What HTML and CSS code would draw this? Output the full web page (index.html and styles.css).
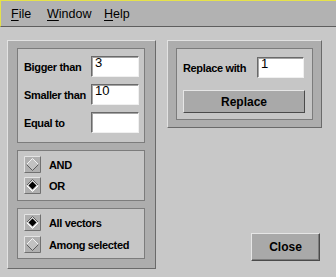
FILE: index.html
```html
<!DOCTYPE html>
<html lang="en">
  <head>
    <meta charset="UTF-8" />
    <title>Select vectors</title>
    <link rel="stylesheet" href="styles.css">
  </head>
  <body>
    <svg class="defs" width="0" height="0">
      <symbol id="radio-off" viewBox="0 0 17 17">
        <rect x="0.5" y="0.5" width="16" height="16" fill="#b0b0b0" />
        <path d="M0.5 16.5V0.5H16.5" stroke="#e4e4e4" fill="none" />
        <path d="M16.5 0.5V16.5H0.5" stroke="#707070" fill="none" />
        <polygon points="8.5,2.5 14.5,8.5 8.5,14.5 2.5,8.5" fill="#c2c2c2" />
        <path d="M2.5 8.5L8.5 2.5L14.5 8.5" stroke="#f4f4f4" fill="none" />
        <path d="M2.5 8.5L8.5 14.5L14.5 8.5" stroke="#5c5c5c" fill="none" />
      </symbol>
      <symbol id="radio-on" viewBox="0 0 17 17">
        <rect x="0.5" y="0.5" width="16" height="16" fill="#b0b0b0" />
        <path d="M0.5 16.5V0.5H16.5" stroke="#e4e4e4" fill="none" />
        <path d="M16.5 0.5V16.5H0.5" stroke="#707070" fill="none" />
        <polygon points="8.5,2.5 14.5,8.5 8.5,14.5 2.5,8.5" fill="#e0e0e0" />
        <path d="M2.5 8.5L8.5 2.5L14.5 8.5" stroke="#5c5c5c" fill="none" />
        <path d="M2.5 8.5L8.5 14.5L14.5 8.5" stroke="#ffffff" fill="none" />
        <polygon points="8.5,4.5 12.5,8.5 8.5,12.5 4.5,8.5" fill="#000" />
      </symbol>
    </svg>

    <div class="menubar">
      <span class="menu-item file"><u>F</u>ile</span>
      <span class="menu-item window"><u>W</u>indow</span>
      <span class="menu-item"><u>H</u>elp</span>
    </div>

    <div class="main">
      <div class="frame left-frame">
        <div class="box fields">
          <div class="row">
            <label for="bigger">Bigger than</label>
            <input type="text" id="bigger" value="3" />
          </div>
          <div class="row">
            <label for="smaller">Smaller than</label>
            <input type="text" id="smaller" value="10" />
          </div>
          <div class="row">
            <label for="equal">Equal to</label>
            <input type="text" id="equal" value="" />
          </div>
        </div>

        <div class="box choices logic">
          <div class="choice">
            <svg width="17" height="17"><use href="#radio-off" /></svg>
            <span>AND</span>
          </div>
          <div class="choice">
            <svg width="17" height="17"><use href="#radio-on" /></svg>
            <span>OR</span>
          </div>
        </div>

        <div class="box choices scope">
          <div class="choice">
            <svg width="17" height="17"><use href="#radio-on" /></svg>
            <span>All vectors</span>
          </div>
          <div class="choice">
            <svg width="17" height="17"><use href="#radio-off" /></svg>
            <span>Among selected</span>
          </div>
        </div>
      </div>

      <div class="right-col">
        <div class="frame right-frame">
          <div class="box replace-box">
            <div class="row">
              <label for="replace">Replace with</label>
              <input type="text" id="replace" value="1" />
            </div>
            <button class="btn replace-btn">Replace</button>
          </div>
        </div>
        <button class="btn close-btn">Close</button>
      </div>
    </div>
  </body>
</html>
```

FILE: styles.css
```css
body {
  margin: 0;
  background: #c8c8c8;
  font-family: "Liberation Sans", Arial, sans-serif;
  color: #000;
  width: 336px;
  height: 277px;
  overflow: hidden;
}
.defs {
  position: absolute;
}
.menubar {
  box-sizing: border-box;
  height: 27px;
  background: #b2b2b2;
  border-top: 1px solid #e6e24a;
  border-left: 1px solid #e6e24a;
  border-bottom: 1px solid #5e5e5e;
  display: flex;
  align-items: center;
  padding-left: 10px;
  font-size: 12.5px;
}
.menu-item u {
  text-underline-offset: 2px;
}
.menu-item.file {
  width: 36px;
}
.menu-item.window {
  width: 57px;
}
.main {
  display: flex;
  gap: 11px;
  padding: 13px 0 0 7px;
}
.frame {
  box-sizing: border-box;
  background: #adadad;
  border: 1px solid;
  border-color: #e2e2e2 #6a6a6a #6a6a6a #e2e2e2;
}
.left-frame {
  width: 149px;
  padding: 7px 10px 9px 9px;
  display: flex;
  flex-direction: column;
  gap: 7px;
}
.box {
  background: #c6c6c6;
  border: 1px solid #7c7c7c;
}
.row {
  display: flex;
  align-items: center;
  justify-content: space-between;
}
label,
.choice span {
  font-size: 11px;
  font-weight: bold;
  letter-spacing: -0.35px;
}
.fields {
  padding: 7px 5px 9px 6px;
  display: flex;
  flex-direction: column;
  gap: 7px;
}
input[type='text'] {
  box-sizing: border-box;
  width: 48px;
  height: 21px;
  padding: 0 0 8px 3px;
  border: 1px solid;
  border-color: #6a6a6a #f0f0f0 #f0f0f0 #6a6a6a;
  box-shadow: inset 1px 1px #a4a4a4;
  background: #fff;
  font-family: "Liberation Sans", Arial, sans-serif;
  font-size: 13px;
  color: #000;
  outline: none;
}
.choices {
  padding: 5px 6px 6px 6px;
  display: flex;
  flex-direction: column;
  gap: 4px;
}
.choices.scope {
  padding-bottom: 5px;
  gap: 5px;
}
.choice {
  display: flex;
  align-items: center;
  gap: 8px;
  height: 17px;
}
.choice svg {
  display: block;
}
.right-col {
  width: 155px;
  display: flex;
  flex-direction: column;
  justify-content: space-between;
}
.right-frame {
  padding: 7px 8px 7px 8px;
}
.replace-box {
  padding: 8px 7px 6px 6px;
  display: flex;
  flex-direction: column;
  gap: 12px;
}
.replace-box input[type='text'] {
  width: 47px;
  margin-right: 1px;
}
.btn {
  box-sizing: border-box;
  background: #a9a9a9;
  border: 1px solid;
  border-color: #e6e6e6 #4a4a4a #4a4a4a #e6e6e6;
  font-family: "Liberation Sans", Arial, sans-serif;
  font-size: 12px;
  font-weight: bold;
  color: #000;
  padding: 0;
}
.replace-btn {
  height: 23px;
  width: 100%;
}
.close-btn {
  align-self: flex-end;
  width: 69px;
  height: 28px;
  margin: 0 2px 8px 0;
  box-shadow: inset -1px -1px #7c7c7c;
}
```
